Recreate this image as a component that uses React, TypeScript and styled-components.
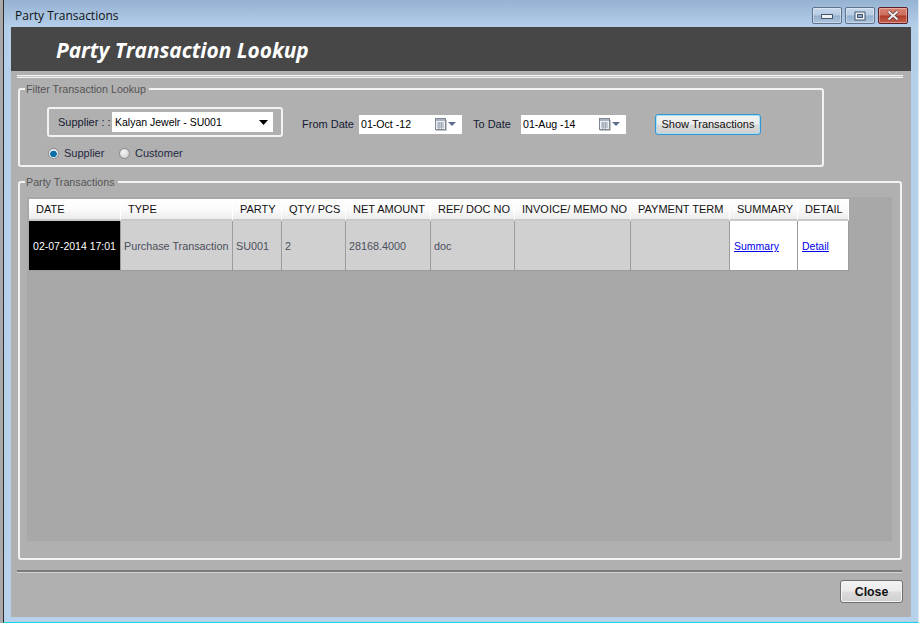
import React from 'react'
import styled, { createGlobalStyle } from 'styled-components'

const GlobalStyle = createGlobalStyle`
  html, body { margin: 0; padding: 0; background: #c9c9c9; }
  #root { width: 919px; height: 623px; overflow: hidden; }
  * { box-sizing: border-box; }
`

const UI_FONT = `"Liberation Sans", Arial, sans-serif`

const Screen = styled.div`
  width: 919px;
  height: 623px;
  padding-left: 3px;
  background: #a9a9a9;
`
const Frame = styled.div`
  width: 916px;
  height: 623px;
  display: flex;
  flex-direction: column;
  border-left: 1px solid #2b2b2b;
  border-right: 1px solid #dfe8f0;
  border-bottom: 1px solid #19d3e6;
  background: linear-gradient(#95b2d2 0, #b4cfea 27px, #b8d2ec 100%);
  padding: 0 7px 5px 7px;
`
const TitleBar = styled.div`
  height: 27px;
  flex: none;
  display: flex;
  align-items: flex-start;
  justify-content: space-between;
  margin-right: 3px;
  padding-top: 7px;
`
const WindowTitle = styled.div`
  font: 12px/18px "Open Sans", sans-serif;
  color: #111;
  padding-left: 4px;
`
const WindowButtons = styled.div`
  display: flex;
  gap: 3px;
`
const WindowButton = styled.div<{ $close?: boolean }>`
  width: 30px;
  height: 17px;
  display: flex;
  align-items: center;
  justify-content: center;
  border-radius: 2px;
  border: 1px solid ${p => (p.$close ? '#5b1f28' : '#60748e')};
  background: ${p =>
    p.$close
      ? 'linear-gradient(#d9826f 0, #cd6f5f 48%, #b13a2a 52%, #c4604f 100%)'
      : 'linear-gradient(#c6d8eb 0, #b5cbe2 48%, #94b0cd 52%, #adc6de 100%)'};
  box-shadow: inset 0 0 0 1px rgba(255, 255, 255, 0.35);
`
const Body = styled.div`
  flex: 1;
  display: flex;
  flex-direction: column;
  background: #b0b0b0;
  min-height: 0;
`
const Banner = styled.div`
  height: 44px;
  flex: none;
  background: #474747;
  padding-left: 45px;
  color: #fff;
  font: italic 700 20.85px/46px "Open Sans", sans-serif;
`
const TopRule = styled.div`
  height: 3px;
  margin: 4px 8px 0 6px;
  border-top: 1px solid #f4f4f4;
  border-bottom: 1px solid #f4f4f4;
  background: #c4c4c4;
`
const Group = styled.fieldset<{ $w: number; $h: number; $mt: number }>`
  width: ${p => p.$w}px;
  height: ${p => p.$h}px;
  margin: ${p => p.$mt}px 0 0 7px;
  padding: 0;
  border: 2px solid #f2f2f2;
  border-radius: 3px;
  min-width: 0;
`
const GroupTitle = styled.legend`
  margin-left: 5px;
  padding: 0 3px 0 1px;
  font: 10.7px/14px ${UI_FONT};
  color: #555;
`
const FilterRow = styled.div`
  display: flex;
  align-items: flex-start;
  padding: 11px 0 0 27px;
`
const SupplierBox = styled.div`
  width: 236px;
  height: 30px;
  display: flex;
  align-items: center;
  padding-left: 9px;
  border: 2px solid #f2f2f2;
  border-radius: 3px;
`
const Label = styled.span<{ $ml?: number; $w: number }>`
  font: 11px/14px ${UI_FONT};
  color: #141a33;
  white-space: nowrap;
  flex: none;
  margin-left: ${p => p.$ml ?? 0}px;
  width: ${p => p.$w}px;
`
const SupplierSelect = styled.div`
  width: 161px;
  height: 20px;
  margin-left: 2px;
  background: #fff;
  display: flex;
  align-items: center;
  justify-content: space-between;
  padding: 0 5px 0 3px;
  font: 10.5px/14px ${UI_FONT};
  color: #000;
`
const DateSlot = styled.div`
  display: flex;
  align-items: center;
  height: 20px;
  margin-top: 7px;
`
const DateBox = styled.div<{ $w: number; $ml: number }>`
  width: ${p => p.$w}px;
  height: 19px;
  margin-left: ${p => p.$ml}px;
  background: #fff;
  display: flex;
  align-items: center;
  justify-content: space-between;
  padding: 0 6px 0 2px;
  font: 10.6px/14px ${UI_FONT};
  color: #000;
`
const ShowButton = styled.button`
  width: 106px;
  height: 21px;
  margin: 7px 0 0 29px;
  padding: 0 0 1px;
  border: 1px solid #2f97d4;
  border-radius: 3px;
  box-shadow: inset 0 0 0 1px #a9def5;
  background: linear-gradient(#f3f3f3 0, #ebebeb 48%, #dcdcdc 52%, #cfcfcf 100%);
  font: 11px/14px ${UI_FONT};
  color: #111;
`
const RadioRow = styled.div`
  display: flex;
  align-items: center;
  height: 14px;
  padding: 9px 0 0 28px;
  box-sizing: content-box;
`
const Radio = styled.span<{ $on?: boolean }>`
  width: 11px;
  height: 11px;
  flex: none;
  border-radius: 50%;
  border: 1px solid #8a8a8a;
  background: ${p =>
    p.$on
      ? 'radial-gradient(circle at 50% 55%, #0c6ea8 0 3px, #e9eef2 3.6px)'
      : 'radial-gradient(circle at 40% 35%, #f5f5f5 0, #c6c6c6 100%)'};
`
const RadioLabel = styled.span<{ $w: number }>`
  font: 11px/14px ${UI_FONT};
  color: #222a40;
  width: ${p => p.$w}px;
  margin-left: 5px;
`
const GridArea = styled.div`
  width: 865px;
  height: 344px;
  margin: 8px 0 0 7px;
  padding: 2px 0 0 2px;
  background: #a8a8a8;
`
const Row = styled.div<{ $h: number }>`
  display: grid;
  grid-template-columns: 92px 112px 49px 64px 85px 84px 116px 99px 68px 51px;
  width: 820px;
  height: ${p => p.$h}px;
`
const HeadCell = styled.div`
  padding-left: 7px;
  border-right: 1px solid #fff;
  border-bottom: 2px solid #c9c9c9;
  background: linear-gradient(#fff 0, #fbfbfb 50%, #ececec 100%);
  font: 11px/21px ${UI_FONT};
  color: #111;
  white-space: nowrap;
  overflow: hidden;
`
const Cell = styled.div<{ $kind?: 'date' | 'link' }>`
  display: flex;
  align-items: center;
  justify-content: ${p => (p.$kind === 'date' ? 'center' : 'flex-start')};
  padding-left: ${p => (p.$kind === 'date' ? 0 : 3)}px;
  padding-top: 1px;
  border-right: 1px solid #9c9c9c;
  border-bottom: 1px solid #9c9c9c;
  background: ${p => (p.$kind === 'date' ? '#000' : p.$kind === 'link' ? '#fff' : '#d0d0d0')};
  color: ${p => (p.$kind === 'date' ? '#fff' : '#4a4f5c')};
  font: ${p => (p.$kind ? 10.5 : 10.8)}px/14px ${UI_FONT};
  white-space: nowrap;
  overflow: hidden;
`
const CellLink = styled.a`
  color: #0000ee;
  text-decoration: underline;
  margin-left: 1px;
`
const Separator = styled.div`
  height: 3px;
  margin: 10px 9px 0 6px;
  border-top: 2px solid #7b7b7b;
  background: #d4d4d4;
`
const Footer = styled.div`
  display: flex;
  justify-content: flex-end;
  padding: 7px 8px 0 0;
`
const CloseButton = styled.button`
  width: 63px;
  height: 23px;
  padding: 0;
  border: 1px solid #707070;
  border-radius: 3px;
  box-shadow: inset 0 0 0 1px #f4f4f4;
  background: linear-gradient(#f3f3f3 0, #ebebeb 48%, #dcdcdc 52%, #cfcfcf 100%);
  font: 700 12.3px/14px ${UI_FONT};
  color: #111;
`

const CalendarIcon = () => (
  <svg width="21" height="13" viewBox="0 0 21 13">
    <rect x="0.5" y="0.5" width="10" height="11" fill="#eef0f3" stroke="#7f8794" />
    <rect x="1" y="1" width="9" height="2" fill="#aab2bf" />
    <path d="M2 5h7M2 7h7M2 9h7M4 4v7M6.5 4v7" stroke="#9aa3b2" strokeWidth="1" />
    <path d="M1 12.5h10.5V2" stroke="#c4c4c4" fill="none" />
    <path d="M13 4h8l-4 4z" fill="#5d6f8f" />
  </svg>
)

const headers = ['DATE', 'TYPE', 'PARTY', 'QTY/ PCS', 'NET AMOUNT', 'REF/ DOC NO', 'INVOICE/ MEMO NO', 'PAYMENT TERM', 'SUMMARY', 'DETAIL']

const App = () => {
  return (
    <>
      <GlobalStyle />
      <Screen>
        <Frame>
          <TitleBar>
            <WindowTitle>Party Transactions</WindowTitle>
            <WindowButtons>
              <WindowButton>
                <svg width="12" height="6" viewBox="0 0 12 6">
                  <rect x="0.5" y="1.5" width="11" height="4" fill="#eef3f8" stroke="#46566b" />
                </svg>
              </WindowButton>
              <WindowButton>
                <svg width="12" height="10" viewBox="0 0 12 10">
                  <rect x="1" y="1" width="10" height="8" fill="#eef3f8" stroke="#46566b" />
                  <rect x="3.5" y="3.5" width="5" height="3" fill="#8ea8c4" stroke="#46566b" />
                </svg>
              </WindowButton>
              <WindowButton $close>
                <svg width="14" height="11" viewBox="0 0 14 11">
                  <path d="M2.5 1.5 11.5 9.5M11.5 1.5 2.5 9.5" stroke="#4b3a3e" strokeWidth="3.6" />
                  <path d="M2.5 1.5 11.5 9.5M11.5 1.5 2.5 9.5" stroke="#f1e9e9" strokeWidth="2.2" />
                </svg>
              </WindowButton>
            </WindowButtons>
          </TitleBar>
          <Body>
            <Banner>Party Transaction Lookup</Banner>
            <TopRule />
            <Group $w={806} $h={85} $mt={4}>
              <GroupTitle>Filter Transaction Lookup</GroupTitle>
              <FilterRow>
                <SupplierBox>
                  <Label $w={52}>Supplier : :</Label>
                  <SupplierSelect>
                    Kalyan Jewelr - SU001
                    <svg width="9" height="5" viewBox="0 0 9 5">
                      <path d="M0 0h9L4.5 5z" fill="#000" />
                    </svg>
                  </SupplierSelect>
                </SupplierBox>
                <DateSlot>
                  <Label $ml={19} $w={52}>From Date</Label>
                  <DateBox $w={103} $ml={5}>
                    01-Oct -12
                    <CalendarIcon />
                  </DateBox>
                  <Label $ml={11} $w={39}>To Date</Label>
                  <DateBox $w={105} $ml={9}>
                    01-Aug -14
                    <CalendarIcon />
                  </DateBox>
                </DateSlot>
                <ShowButton>Show Transactions</ShowButton>
              </FilterRow>
              <RadioRow>
                <Radio $on />
                <RadioLabel $w={55}>Supplier</RadioLabel>
                <Radio />
                <RadioLabel $w={60}>Customer</RadioLabel>
              </RadioRow>
            </Group>
            <Group $w={884} $h={385} $mt={8}>
              <GroupTitle>Party Transactions</GroupTitle>
              <GridArea>
                <Row $h={22}>
                  {headers.map(h => (
                    <HeadCell key={h}>{h}</HeadCell>
                  ))}
                </Row>
                <Row $h={50}>
                  <Cell $kind="date">02-07-2014 17:01</Cell>
                  <Cell>Purchase Transaction</Cell>
                  <Cell>SU001</Cell>
                  <Cell>2</Cell>
                  <Cell>28168.4000</Cell>
                  <Cell>doc</Cell>
                  <Cell />
                  <Cell />
                  <Cell $kind="link">
                    <CellLink href="#">Summary</CellLink>
                  </Cell>
                  <Cell $kind="link">
                    <CellLink href="#">Detail</CellLink>
                  </Cell>
                </Row>
              </GridArea>
            </Group>
            <Separator />
            <Footer>
              <CloseButton>Close</CloseButton>
            </Footer>
          </Body>
        </Frame>
      </Screen>
    </>
  )
}

export default App
